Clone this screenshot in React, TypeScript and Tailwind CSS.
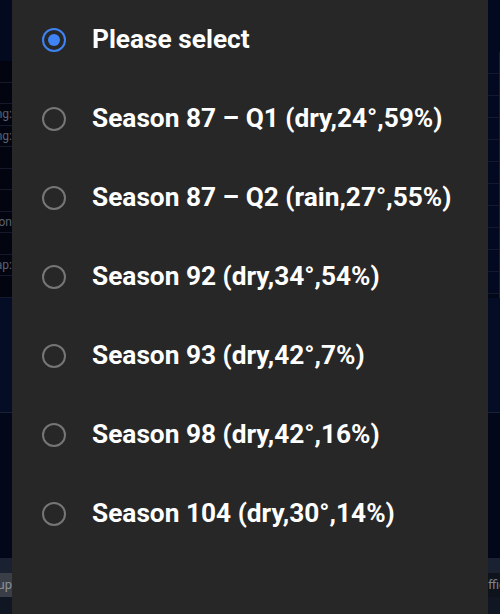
import { useState } from "react";

const seasons = [
  "Please select",
  "Season 87 – Q1 (dry,24°,59%)",
  "Season 87 – Q2 (rain,27°,55%)",
  "Season 92 (dry,34°,54%)",
  "Season 93 (dry,42°,7%)",
  "Season 98 (dry,42°,16%)",
  "Season 104 (dry,30°,14%)",
];

// labels of the settings table behind the dialog (mostly hidden)
const rows = ["", "", "Spacing:", "Padding:", "", "", "", "Position", "", "Gap:", ""];

function Radio({ checked }: { checked: boolean }) {
  return (
    <span
      className={`flex h-6 w-6 shrink-0 items-center justify-center rounded-full border-[2.5px] ${
        checked ? "border-[#3f84f4]" : "border-[#767676]"
      }`}
    >
      {checked && <span className="h-3 w-3 rounded-full bg-[#3f84f4]" />}
    </span>
  );
}

export default function App() {
  const [selected, setSelected] = useState(0);

  return (
    <div className="relative h-[614px] w-[500px] overflow-hidden bg-[#030818] font-['Roboto',sans-serif]">
      {/* Page behind the dialog */}
      <div className="flex h-full flex-col text-[12px] text-[#5b6170]">
        <div className="h-[61px] shrink-0 bg-[#030a20]" />
        <div className="flex shrink-0 justify-between">
          <div className="w-[12px]">
            {rows.map((r, i) => (
              <div
                key={i}
                className="flex h-[21.5px] items-center justify-end overflow-hidden whitespace-nowrap border-b border-[#141a2c] bg-[#02050f]"
              >
                {r}
              </div>
            ))}
          </div>
          <div className="mt-[-9px] w-[12px] border-r border-[#1a2136]">
            {rows.map((_, i) => (
              <div key={i} className="h-[22px] border-b border-[#141a2c] bg-[#030920]" />
            ))}
          </div>
        </div>
        <div className="h-[115px] shrink-0 border-b border-[#1a2136] bg-[#040c26]" />
        <div className="h-[145px] shrink-0 bg-[#020719]" />
        <div className="h-[15px] shrink-0 bg-[#1a2130]" />
        <div className="flex h-[24px] shrink-0 items-center justify-between bg-[#0f131b]">
          <div className="flex h-full w-[12px] items-center justify-end overflow-hidden bg-[#3a3e46] text-[13px] text-[#8b8f97]">
            Sup
          </div>
          <div className="flex h-full w-[12px] items-center overflow-hidden whitespace-nowrap text-[13px] text-[#7d818a]">
            ffic
          </div>
        </div>
        <div className="flex-1 bg-[#111722]" />
      </div>

      {/* Select dialog */}
      <div className="absolute inset-y-0 left-[12px] w-[476px] bg-[#272727]">
        <ul className="flex flex-col">
          {seasons.map((s, i) => (
            <li key={s}>
              <button
                type="button"
                onClick={() => setSelected(i)}
                className="flex h-[79px] w-full items-center gap-[26px] pl-[30px] text-left"
              >
                <Radio checked={selected === i} />
                <span className="whitespace-nowrap text-[26.25px] font-bold text-white">{s}</span>
              </button>
            </li>
          ))}
        </ul>
      </div>
    </div>
  );
}
